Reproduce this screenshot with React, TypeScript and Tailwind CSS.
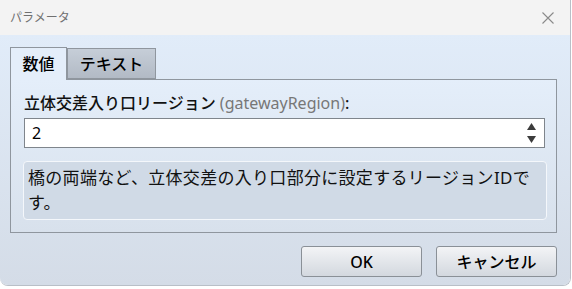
import React from "react";

const jp = { fontFamily: '"Noto Sans", "Noto Sans CJK JP", sans-serif' };

function Spinner() {
  return (
    <div className="flex flex-col items-center gap-[6px] mr-[8px]">
      <svg width="9" height="7" viewBox="0 0 9 7">
        <path d="M4.5 0 L9 7 L0 7 Z" fill="#3c3c3c" />
      </svg>
      <svg width="9" height="7" viewBox="0 0 9 7">
        <path d="M0 0 L9 0 L4.5 7 Z" fill="#3c3c3c" />
      </svg>
    </div>
  );
}

export default function App() {
  return (
    <div className="w-[572px] h-[289px] bg-white" style={jp}>
      <div className="w-[571px] h-[286px] rounded-b-[8px] border-r border-b border-[#b9bfc7] overflow-hidden flex flex-col">
        {/* Title bar */}
        <div className="h-[35px] bg-[#f3f3f3] flex items-center justify-between pl-[10px] pr-[16px]">
          <span className="text-[12px] text-[#707070]">パラメータ</span>
          <svg width="12" height="12" viewBox="0 0 12 12">
            <path d="M0.5 0.5 L11.5 11.5 M11.5 0.5 L0.5 11.5" stroke="#8a8a8a" strokeWidth="1.1" />
          </svg>
        </div>

        {/* Body */}
        <div className="flex-1 bg-gradient-to-b from-[#e1ecf9] to-[#d4dce7] pl-[10px] pt-[12px]">
          {/* Tabs */}
          <div className="flex items-end h-[32px]">
            <div className="w-[57px] h-[33px] -mb-px relative z-10 border-l border-t border-r border-[#8f969e] bg-[#e4eefa] flex items-center justify-center text-[16px] font-medium text-black">
              数値
            </div>
            <div className="w-[89px] h-[31px] border border-[#8f969e] bg-gradient-to-b from-[#c6ced8] to-[#b2bac5] flex items-center justify-center text-[16px] font-medium text-black">
              テキスト
            </div>
          </div>

          {/* Panel */}
          <div className="w-[547px] h-[154px] border border-[#8f969e] bg-gradient-to-b from-[#e4eefa] to-[#d8e1ec] pl-[12px] pt-[13px]">
            <div className="text-[16px] leading-[20px] font-medium text-[#111] pl-px">
              立体交差入り口リージョン <span className="text-[#777] font-normal">(gatewayRegion)</span>:
            </div>
            <div className="mt-[5px] ml-px w-[521px] h-[30px] bg-white border border-[#7f858c] flex items-center justify-between">
              <span className="pl-[7px] text-[16px] text-black">2</span>
              <Spinner />
            </div>
            <div className="mt-[13px] w-[524px] h-[59px] rounded-[4px] border border-[#f4f7fb] bg-[#d0dae6] px-[4px] pt-[3px] text-[17px] leading-[25px] text-[#111] tracking-[0.3px]">
              橋の両端など、立体交差の入り口部分に設定するリージョンIDです。
            </div>
          </div>

          {/* Buttons */}
          <div className="flex justify-end gap-[14px] pr-[13px] mt-[13px]">
            <button className="w-[121px] h-[31px] rounded-[3px] border border-[#8a9097] bg-gradient-to-b from-[#f3f4f6] to-[#d3d8df] text-[16px] font-medium text-black">
              OK
            </button>
            <button className="w-[121px] h-[31px] rounded-[3px] border border-[#8a9097] bg-gradient-to-b from-[#f3f4f6] to-[#d3d8df] text-[16px] font-medium text-black">
              キャンセル
            </button>
          </div>
        </div>
      </div>
    </div>
  );
}
